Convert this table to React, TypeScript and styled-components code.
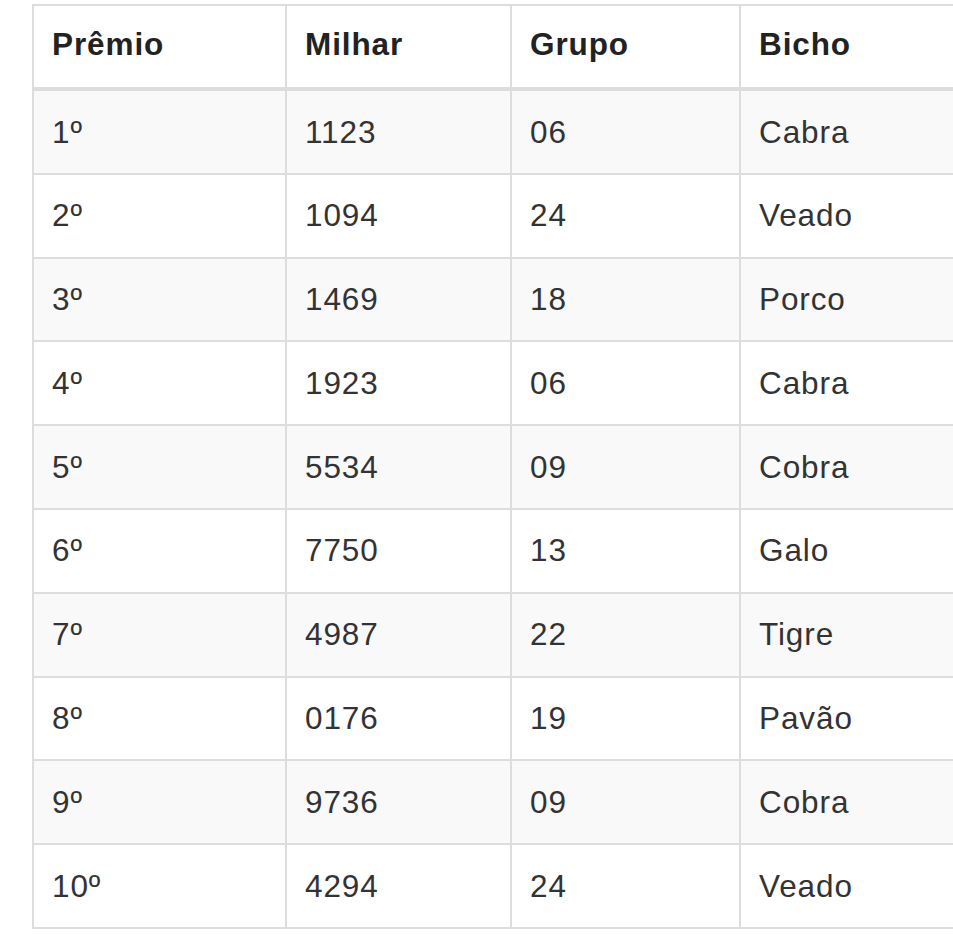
import { FC } from "react";
import styled, { createGlobalStyle } from "styled-components";

const GlobalStyle = createGlobalStyle`
  html, body {
    margin: 0;
    padding: 0;
    background: #fff;
    overflow: hidden;
  }
  body {
    font-family: "Liberation Sans", Arial, sans-serif;
    color: #333;
  }
`;

const Page = styled.div`
  padding: 4px 0 0 32px;
  width: 1100px;
`;

const Table = styled.table`
  border-collapse: collapse;
  table-layout: fixed;
  width: 969px;
  font-size: 31.5px;
  border: 2px solid #ddd;
`;

const Column = styled.col<{ $w: number }>`
  width: ${(p) => p.$w}px;
`;

const HeadCell = styled.th`
  text-align: left;
  font-weight: 700;
  color: #222;
  line-height: 45px;
  letter-spacing: 0.9px;
  padding: 15.5px 18px 20.5px;
  border: 2px solid #ddd;
  border-bottom-width: 4px;
`;

const Row = styled.tr<{ $striped: boolean }>`
  background: ${(p) => (p.$striped ? "#f9f9f9" : "#fff")};
`;

const Cell = styled.td`
  line-height: 45px;
  letter-spacing: 0.9px;
  padding: 18.5px 18px 18.3px;
  border: 2px solid #ddd;
  color: #333;
  white-space: nowrap;
`;

const columns = [
  { title: "Prêmio", width: 253 },
  { title: "Milhar", width: 225 },
  { title: "Grupo", width: 229 },
  { title: "Bicho", width: 262 },
];

const results = [
  ["1º", "1123", "06", "Cabra"],
  ["2º", "1094", "24", "Veado"],
  ["3º", "1469", "18", "Porco"],
  ["4º", "1923", "06", "Cabra"],
  ["5º", "5534", "09", "Cobra"],
  ["6º", "7750", "13", "Galo"],
  ["7º", "4987", "22", "Tigre"],
  ["8º", "0176", "19", "Pavão"],
  ["9º", "9736", "09", "Cobra"],
  ["10º", "4294", "24", "Veado"],
];

const App: FC = () => {
  return (
    <Page>
      <GlobalStyle />
      <Table>
        <colgroup>
          {columns.map((c) => (
            <Column key={c.title} $w={c.width} />
          ))}
        </colgroup>
        <thead>
          <tr>
            {columns.map((c) => (
              <HeadCell key={c.title}>{c.title}</HeadCell>
            ))}
          </tr>
        </thead>
        <tbody>
          {results.map((r, i) => (
            <Row key={r[0]} $striped={i % 2 === 0}>
              {r.map((v, j) => (
                <Cell key={j}>{v}</Cell>
              ))}
            </Row>
          ))}
        </tbody>
      </Table>
    </Page>
  );
};

export default App;
